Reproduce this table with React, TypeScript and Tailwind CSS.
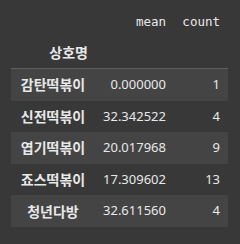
import React from 'react';

const rows = [
  { name: '감탄떡볶이', mean: '0.000000', count: '1' },
  { name: '신전떡볶이', mean: '32.342522', count: '4' },
  { name: '엽기떡볶이', mean: '20.017968', count: '9' },
  { name: '죠스떡볶이', mean: '17.309602', count: '13' },
  { name: '청년다방', mean: '32.611560', count: '4' },
];

export default function App() {
  return (
    <div className="w-[240px] h-[244px] bg-[#383838] pt-[8px] pl-[11px] text-[#e8e8e8] font-['Noto_Sans','Noto_Sans_CJK_KR',sans-serif]">
      <div className="w-[217px]">
        <div className="flex h-[28px] items-center font-['DejaVu_Sans_Mono',monospace] text-[12.5px]">
          <div className="w-[84px]" />
          <div className="w-[79px] pr-[8px] text-right">mean</div>
          <div className="w-[54px] pr-[8px] text-right">count</div>
        </div>
        <div className="flex h-[33px] items-center border-b border-[#5e5e5e] text-[14px] font-bold font-['Noto_Sans_CJK_KR',sans-serif]">
          <div className="w-[84px] pr-[7px] text-right">상호명</div>
        </div>
        {rows.map((r, i) => (
          <div
            key={r.name}
            className={`flex h-[31.6px] items-center text-[13px] ${i % 2 === 0 ? 'bg-[#444444]' : ''}`}
          >
            <div className="w-[84px] text-center text-[14px] font-bold font-['Noto_Sans_CJK_KR',sans-serif]">{r.name}</div>
            <div className="w-[79px] pr-[8px] text-right">{r.mean}</div>
            <div className="w-[54px] pr-[8px] text-right">{r.count}</div>
          </div>
        ))}
      </div>
    </div>
  );
}
